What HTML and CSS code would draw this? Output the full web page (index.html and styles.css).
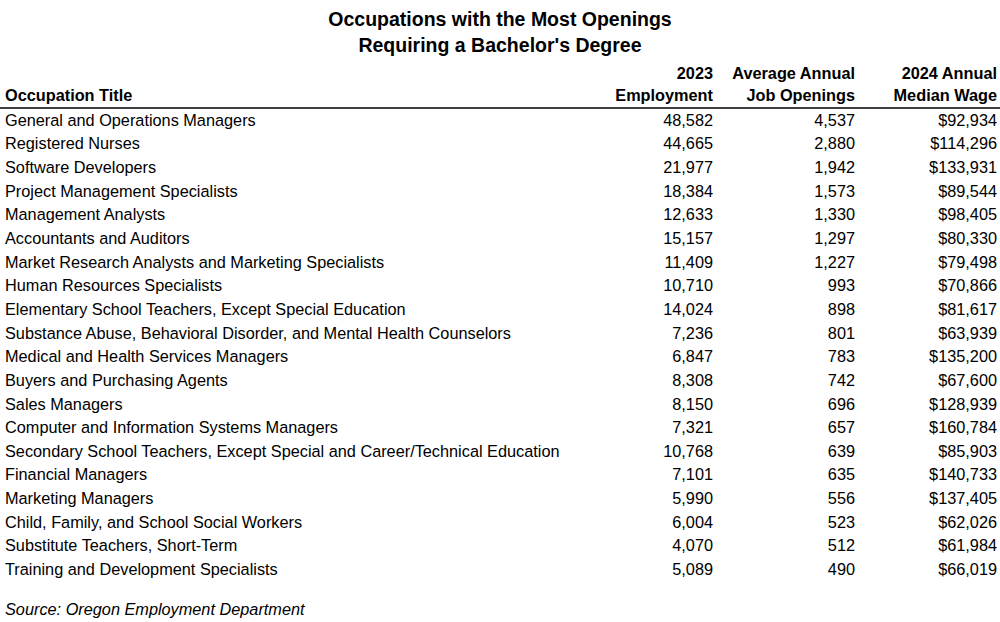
FILE: index.html
```html
<!DOCTYPE html>
<html lang="en">
  <head>
    <meta charset="UTF-8" />
    <meta name="viewport" content="width=device-width, initial-scale=1.0" />
    <title>Occupations with the Most Openings</title>
    <link rel="stylesheet" href="styles.css">
  </head>
  <body>
    <div class="report">
      <h1 class="report-title">
        Occupations with the Most Openings<br />
        Requiring a Bachelor's Degree
      </h1>

      <table class="jobs-table">
        <colgroup>
          <col />
          <col class="col-emp" />
          <col class="col-open" />
          <col class="col-wage" />
        </colgroup>
        <thead>
          <tr>
            <th class="col-title">Occupation Title</th>
            <th>2023<br />Employment</th>
            <th>Average Annual<br />Job Openings</th>
            <th>2024 Annual<br />Median Wage</th>
          </tr>
        </thead>
        <tbody>
          <tr><td>General and Operations Managers</td><td>48,582</td><td>4,537</td><td>$92,934</td></tr>
          <tr><td>Registered Nurses</td><td>44,665</td><td>2,880</td><td>$114,296</td></tr>
          <tr><td>Software Developers</td><td>21,977</td><td>1,942</td><td>$133,931</td></tr>
          <tr><td>Project Management Specialists</td><td>18,384</td><td>1,573</td><td>$89,544</td></tr>
          <tr><td>Management Analysts</td><td>12,633</td><td>1,330</td><td>$98,405</td></tr>
          <tr><td>Accountants and Auditors</td><td>15,157</td><td>1,297</td><td>$80,330</td></tr>
          <tr><td>Market Research Analysts and Marketing Specialists</td><td>11,409</td><td>1,227</td><td>$79,498</td></tr>
          <tr><td>Human Resources Specialists</td><td>10,710</td><td>993</td><td>$70,866</td></tr>
          <tr><td>Elementary School Teachers, Except Special Education</td><td>14,024</td><td>898</td><td>$81,617</td></tr>
          <tr><td>Substance Abuse, Behavioral Disorder, and Mental Health Counselors</td><td>7,236</td><td>801</td><td>$63,939</td></tr>
          <tr><td>Medical and Health Services Managers</td><td>6,847</td><td>783</td><td>$135,200</td></tr>
          <tr><td>Buyers and Purchasing Agents</td><td>8,308</td><td>742</td><td>$67,600</td></tr>
          <tr><td>Sales Managers</td><td>8,150</td><td>696</td><td>$128,939</td></tr>
          <tr><td>Computer and Information Systems Managers</td><td>7,321</td><td>657</td><td>$160,784</td></tr>
          <tr><td>Secondary School Teachers, Except Special and Career/Technical Education</td><td>10,768</td><td>639</td><td>$85,903</td></tr>
          <tr><td>Financial Managers</td><td>7,101</td><td>635</td><td>$140,733</td></tr>
          <tr><td>Marketing Managers</td><td>5,990</td><td>556</td><td>$137,405</td></tr>
          <tr><td>Child, Family, and School Social Workers</td><td>6,004</td><td>523</td><td>$62,026</td></tr>
          <tr><td>Substitute Teachers, Short-Term</td><td>4,070</td><td>512</td><td>$61,984</td></tr>
          <tr><td>Training and Development Specialists</td><td>5,089</td><td>490</td><td>$66,019</td></tr>
        </tbody>
      </table>

      <p class="source">Source: Oregon Employment Department</p>
    </div>
  </body>
</html>
```

FILE: styles.css
```css
body {
  margin: 0;
  background-color: #ffffff;
  color: #000000;
  font-family: "Liberation Sans", Arial, sans-serif;
  font-size: 16.3px;
}

.report {
  width: 1000px;
  padding-top: 6px;
  box-sizing: border-box;
}

.report-title {
  margin: 0 0 4px 0;
  font-size: 19.5px;
  line-height: 26px;
  font-weight: bold;
  text-align: center;
}

.jobs-table {
  width: 100%;
  border-collapse: collapse;
  table-layout: fixed;
}

.col-emp {
  width: 142px;
}

.col-open {
  width: 142px;
}

.col-wage {
  width: 145px;
}

.jobs-table th,
.jobs-table td {
  box-sizing: border-box;
  padding: 0;
  text-align: right;
  white-space: nowrap;
}

.jobs-table th {
  font-weight: bold;
  line-height: 22px;
  padding-bottom: 1px;
  vertical-align: bottom;
  border-bottom: 2px solid #404040;
}

.jobs-table td {
  height: 23.65px;
  line-height: 18px;
}

.jobs-table th:first-child,
.jobs-table td:first-child {
  text-align: left;
  padding-left: 5px;
}

.jobs-table th:last-child,
.jobs-table td:last-child {
  padding-right: 3px;
}

.source {
  margin: 18px 0 0 5px;
  font-style: italic;
  line-height: 20px;
}
```
